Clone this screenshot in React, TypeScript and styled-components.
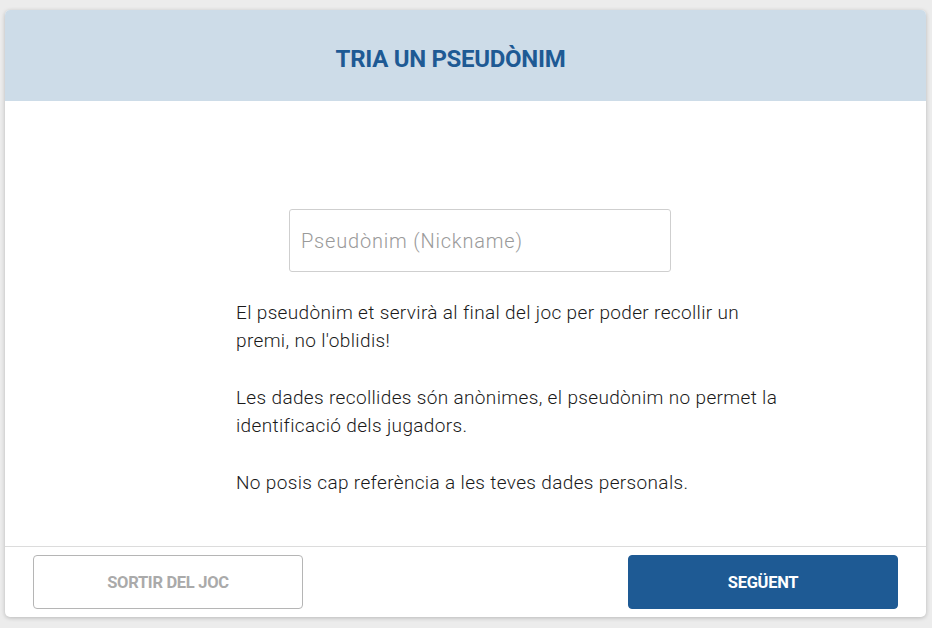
import React from "react";
import styled, { createGlobalStyle } from "styled-components";

const Global = createGlobalStyle`
  html, body { margin: 0; padding: 0; background: #ececec; }
  body { font-family: Roboto, "Liberation Sans", sans-serif; }
  * { box-sizing: border-box; }
`;

const Page = styled.div`
  padding: 10px 6px 0 5px;
  width: 932px;
  height: 628px;
`;

const Card = styled.div`
  width: 921px;
  height: 607px;
  background: #fff;
  border-radius: 5px;
  box-shadow: 0 1px 4px rgba(0, 0, 0, 0.22);
  overflow: hidden;
  display: flex;
  flex-direction: column;
`;

const Header = styled.div`
  height: 91px;
  background: #cddce8;
  display: flex;
  align-items: center;
  justify-content: center;
  padding: 7px 30px 0 0;
`;

const Title = styled.h1`
  margin: 0;
  font-size: 24px;
  font-weight: 700;
  color: #1e5a94;
  letter-spacing: -0.3px;
`;

const Body = styled.div`
  flex: 1;
  display: flex;
  flex-direction: column;
  padding: 108px 0 0 231px;
`;

const Input = styled.input`
  margin-left: 53px;
  width: 382px;
  height: 63px;
  border: 1px solid #cfcfcf;
  border-radius: 3px;
  padding: 0 11px;
  font-family: Roboto, "Liberation Sans", sans-serif;
  font-size: 20px;
  font-weight: 300;
  letter-spacing: 0.8px;
  color: #333;
  outline: none;
  &::placeholder { color: #9a9a9a; }
`;

const Text = styled.p`
  margin: 0;
  width: 560px;
  font-size: 19px;
  font-weight: 300;
  letter-spacing: 0.35px;
  line-height: 28px;
  color: #1a1a1a;
  & + & { margin-top: 29px; }
`;

const TextBlock = styled.div`
  margin-top: 27px;
`;

const Footer = styled.div`
  height: 71px;
  border-top: 1px solid #dcdcdc;
  display: flex;
  justify-content: space-between;
  align-items: flex-start;
  padding: 8px 28px 0 28px;
`;

const Button = styled.button<{ $primary?: boolean }>`
  width: 270px;
  height: 54px;
  border-radius: 4px;
  font-family: Roboto, "Liberation Sans", sans-serif;
  font-size: 16.5px;
  font-weight: 700;
  letter-spacing: -0.3px;
  cursor: pointer;
  border: 1px solid ${(p) => (p.$primary ? "#1e5a94" : "#b5b5b5")};
  background: ${(p) => (p.$primary ? "#1e5a94" : "#fff")};
  color: ${(p) => (p.$primary ? "#fff" : "#aaaaaa")};
`;

export default function App() {
  return (
    <Page>
      <Global />
      <Card>
        <Header>
          <Title>TRIA UN PSEUDÒNIM</Title>
        </Header>
        <Body>
          <Input placeholder="Pseudònim (Nickname)" />
          <TextBlock>
            <Text>
              El pseudònim et servirà al final del joc per poder recollir un
              premi, no l'oblidis!
            </Text>
            <Text>
              Les dades recollides són anònimes, el pseudònim no permet la
              identificació dels jugadors.
            </Text>
            <Text>No posis cap referència a les teves dades personals.</Text>
          </TextBlock>
        </Body>
        <Footer>
          <Button>SORTIR DEL JOC</Button>
          <Button $primary>SEGÜENT</Button>
        </Footer>
      </Card>
    </Page>
  );
}
